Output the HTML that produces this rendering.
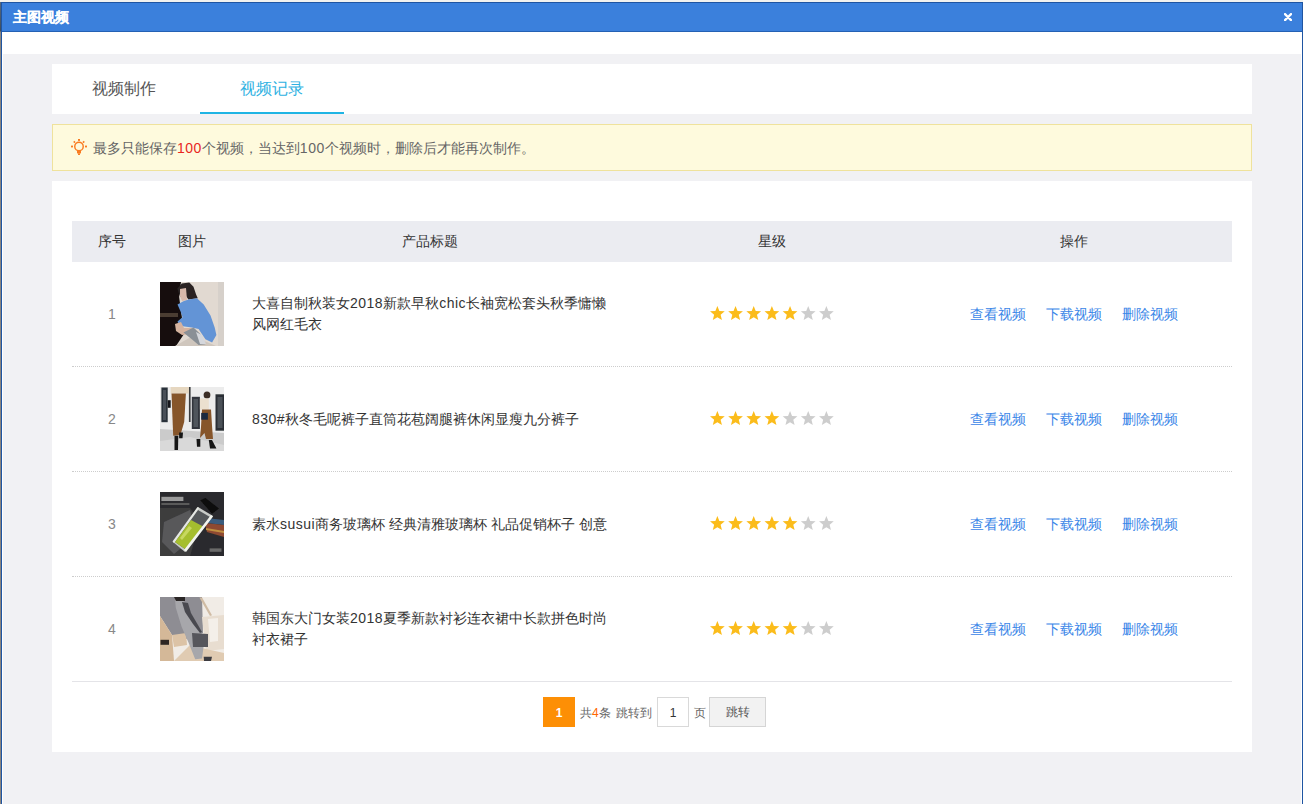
<!DOCTYPE html>
<html><head><meta charset="utf-8"><title>主图视频</title>
<style>
*{margin:0;padding:0;box-sizing:border-box}
html,body{width:1303px;height:804px;overflow:hidden;background:#f2f2ef}
body{font-family:"Liberation Sans",sans-serif;position:relative}
.abs{position:absolute}
#edgeL{left:0;top:2px;width:1px;height:802px;background:linear-gradient(#55687e 0,#3f4d5c 29px,#8a8580 30px,#8a8580 100%)}
#modal{left:1px;top:2px;width:1302px;height:802px;background:#fff;border:1px solid #1f55a2;border-bottom:none}
#graybg{left:3px;top:54px;width:1298px;height:750px;background:#f1f1f4}
#hdr{left:2px;top:3px;width:1300px;height:29px;background:#3b80dc;border-bottom:1px solid #2461b4}
#hdr .t{position:absolute;left:11px;top:5.5px;font-size:14px;font-weight:bold;color:#fff;line-height:16px;-webkit-text-stroke:0.12px #fff}
#hdr .x{position:absolute;left:1281.8px;top:9.7px;width:8px;height:8.2px}
#white{left:2px;top:32px;width:1300px;height:22px;background:#fff}
.card{position:absolute;left:52px;width:1200px;background:#fff}
#tabs{top:64px;height:50px}
.tab{position:absolute;top:0;height:50px;line-height:50px;font-size:16px;color:#555;text-align:center}
#notice{left:52px;top:124px;width:1200px;height:47px;background:#fefadd;border:1px solid #efe29c}
#notice .txt{position:absolute;left:40px;top:14px;font-size:14px;line-height:18px;color:#666;white-space:nowrap}
#tbl{top:181px;height:571px}
#thead{position:absolute;left:20px;top:40px;width:1160px;height:41px;background:#ebecf1;font-size:14px;color:#333}
.th{position:absolute;top:0;line-height:41px;text-align:center}
.row{position:absolute;left:20px;width:1160px;height:105px;border-bottom:1px dotted #cdcdcd}
.row .num{position:absolute;left:0;width:80px;top:0;line-height:104px;text-align:center;font-size:14px;color:#888}
.row .pic{position:absolute;left:88px;top:20px;width:64px;height:64px;overflow:hidden}
.row .ttl{position:absolute;left:180px;width:356px;font-size:14px;line-height:21px;color:#333}
.row .stars{position:absolute;left:638px;top:44px;height:15px}
.row .ops{position:absolute;left:898px;top:0;line-height:104px;font-size:14px;color:#3a86e8;white-space:nowrap}
.ops span{position:absolute;top:0}
.l{letter-spacing:0.5px}
.row.last{border-bottom:1px solid #e4e4e8;height:105px}
#pager{position:absolute;left:491px;top:516px;height:30px;font-size:12px;color:#666;white-space:nowrap}
#pager .cur{position:absolute;left:0;top:0;width:32px;height:30px;background:#fd8f05;color:#fff;font-weight:bold;text-align:center;line-height:32px}
#pager .lab{position:absolute;top:1px;line-height:30px}
#pager .inp{position:absolute;left:114px;top:0;width:32px;height:30px;border:1px solid #d9d9d9;text-align:center;line-height:30px;color:#333}
#pager .btn{position:absolute;left:166px;top:0;width:57px;height:30px;border:1px solid #d5d5d5;background:#f2f2f2;text-align:center;line-height:29px;color:#555}
</style></head>
<body>
<div class="abs" id="edgeL"></div>
<div class="abs" id="modal"></div>
<div class="abs" id="hdr"><span class="t">主图视频</span>
<svg class="x" viewBox="0 0 8 8.2"><path d="M1 1.1L7 7.1M7 1.1L1 7.1" stroke="#fff" stroke-width="2.3" stroke-linecap="round"/></svg></div>
<div class="abs" id="white"></div>
<div class="abs" id="graybg"></div>

<div class="card" id="tabs">
  <div class="tab" style="left:0;width:144px">视频制作</div>
  <div class="tab" style="left:148px;width:144px;color:#2eb1e2">视频记录</div>
  <div class="abs" style="left:148px;top:48px;width:144px;height:2px;background:#1fb4e4"></div>
</div>

<div class="abs" id="notice">
  <svg class="abs" style="left:13px;top:9px" width="26" height="26" viewBox="0 0 26 26"><g fill="#f97c22"><circle cx="13" cy="12.5" r="4.25" fill="none" stroke="#f97c22" stroke-width="1.45"/><rect x="12" y="5" width="2" height="1.9"/><rect x="5" y="11.6" width="2" height="1.8"/><rect x="19" y="11.6" width="2" height="1.8"/><path d="M7.2 7.9L8.3 6.8L9.6 8.1L8.5 9.2Z"/><path d="M18.8 7.9L17.7 6.8L16.4 8.1L17.5 9.2Z"/><rect x="11" y="17" width="4" height="2.4"/><rect x="12" y="19.3" width="2" height="1.7"/></g></svg>
  <div class="txt">最多只能保存<span class="l" style="color:#e8261f">100</span>个视频，当达到<span class="l">100</span>个视频时，删除后才能再次制作。</div>
</div>

<div class="card" id="tbl">
  <div id="thead">
    <div class="th" style="left:0;width:80px">序号</div>
    <div class="th" style="left:80px;width:80px">图片</div>
    <div class="th" style="left:160px;width:396px">产品标题</div>
    <div class="th" style="left:556px;width:288px">星级</div>
    <div class="th" style="left:844px;width:316px">操作</div>
  </div>
  <!--ROWS-->
  <div class="row" style="top:81px">
    <div class="num">1</div>
    <div class="pic"><svg width="64" height="64" viewBox="0 0 64 64"><defs><filter id="b1" x="-5%" y="-5%" width="110%" height="110%"><feGaussianBlur stdDeviation="0.45"/></filter></defs>
<rect width="64" height="64" fill="#e1d9d1"/><g filter="url(#b1)">
<rect x="0" y="0" width="64" height="64" fill="#e1d9d1"/>
<rect x="58" y="0" width="6" height="64" fill="#d6d0ca"/>
<path d="M0 0H21L19 14L22 36L18 44L24 52L16 64H0Z" fill="#141110"/>
<path d="M0 31H18V35H0Z" fill="#4b3d31"/>
<path d="M15 64L31 55L47 60L56 64Z" fill="#cfc6bd"/>
<path d="M17.5 6.5L21.7 1.4L29.3 0.5L33.5 4.8L36.1 12.4L37.8 16.2L28.5 17.5L23.4 10.7L20 14.9Z" fill="#2a2424"/>
<path d="M20 7L26 6L27 18L22 19L20 14Z" fill="#d8b8aa"/>
<path d="M17.5 22.5L23.4 19.2L28.5 17.5L36.9 16.2L43.7 22.5L50.5 33.5L54.7 45.4L56.4 53L52.1 60.6L45.4 57.2L38.6 47.1L31.8 45.4L19.2 43.7L17.5 39.5L22.5 35.2L20.8 30.1Z" fill="#6494d6"/>
<path d="M15 42L21 40L24 46L32 46L31 52L22 53L16 49Z" fill="#d6b39f"/>
<path d="M23.4 50.5L33.5 45.4L40.3 52.1L45.4 62.3L38.6 63.1L31.8 57.2Z" fill="#8a9096"/>
<path d="M36 50L42 53L46 62L40 62Z" fill="#d5d7dc"/>
</g></svg></div>
    <div class="ttl" style="top:31px">大喜自制秋装女<span class="l">2018</span>新款早秋<span class="l">chic</span>长袖宽松套头秋季慵懒风网红毛衣</div>
    <svg class="stars" width="124" height="15" viewBox="0 0 124 15"><path transform="translate(0.00,0)" d="M7.37 0.00L9.37 4.99L14.74 5.36L10.61 8.80L11.93 14.02L7.37 11.16L2.81 14.02L4.13 8.80L-0.00 5.36L5.37 4.99Z" fill="#fbbc1b"/><path transform="translate(18.17,0)" d="M7.37 0.00L9.37 4.99L14.74 5.36L10.61 8.80L11.93 14.02L7.37 11.16L2.81 14.02L4.13 8.80L-0.00 5.36L5.37 4.99Z" fill="#fbbc1b"/><path transform="translate(36.34,0)" d="M7.37 0.00L9.37 4.99L14.74 5.36L10.61 8.80L11.93 14.02L7.37 11.16L2.81 14.02L4.13 8.80L-0.00 5.36L5.37 4.99Z" fill="#fbbc1b"/><path transform="translate(54.51,0)" d="M7.37 0.00L9.37 4.99L14.74 5.36L10.61 8.80L11.93 14.02L7.37 11.16L2.81 14.02L4.13 8.80L-0.00 5.36L5.37 4.99Z" fill="#fbbc1b"/><path transform="translate(72.68,0)" d="M7.37 0.00L9.37 4.99L14.74 5.36L10.61 8.80L11.93 14.02L7.37 11.16L2.81 14.02L4.13 8.80L-0.00 5.36L5.37 4.99Z" fill="#fbbc1b"/><path transform="translate(90.85,0)" d="M7.37 0.00L9.37 4.99L14.74 5.36L10.61 8.80L11.93 14.02L7.37 11.16L2.81 14.02L4.13 8.80L-0.00 5.36L5.37 4.99Z" fill="#cdcdcd"/><path transform="translate(109.02,0)" d="M7.37 0.00L9.37 4.99L14.74 5.36L10.61 8.80L11.93 14.02L7.37 11.16L2.81 14.02L4.13 8.80L-0.00 5.36L5.37 4.99Z" fill="#cdcdcd"/></svg>
    <div class="ops"><span style="left:0">查看视频</span><span style="left:76px">下载视频</span><span style="left:152px">删除视频</span></div>
  </div>
  <div class="row" style="top:186px">
    <div class="num">2</div>
    <div class="pic"><svg width="64" height="64" viewBox="0 0 64 64"><defs><filter id="b2" x="-5%" y="-5%" width="110%" height="110%"><feGaussianBlur stdDeviation="0.45"/></filter></defs>
<rect width="64" height="64" fill="#e6e6e6"/><g filter="url(#b2)">
<rect width="64" height="64" fill="#ececec"/>
<path d="M0 42L64 46V64H0Z" fill="#cbcbcb"/>
<path d="M0 54L30 50L64 58V64H0Z" fill="#d9d9d9"/>
<rect x="1.4" y="0.5" width="6.3" height="34.7" fill="#2c323a"/><rect x="3" y="3" width="3" height="30" fill="#4a5058"/>
<rect x="31.8" y="9.8" width="8.1" height="32.2" fill="#30353c"/><rect x="33.5" y="12" width="4.5" height="28" fill="#50555c"/>
<rect x="28.9" y="0" width="1.7" height="35" fill="#3a3c40"/>
<rect x="55.5" y="7.3" width="8.5" height="36.4" fill="#2a2f36"/><rect x="57.5" y="10" width="5" height="31" fill="#4c5158"/>
<path d="M10.7 0H28.9V6.5H10.7Z" fill="#e6d7c0"/>
<path d="M11.5 6.5L25.9 6.5L24.2 35L20.4 48L13.2 48.8Z" fill="#86542a"/>
<rect x="7.7" y="13.2" width="3" height="7.6" fill="#16171a"/>
<path d="M14.5 48.8H18.3L18 63.1H14.5Z" fill="#141414"/>
<path d="M19.1 45.4H23L22.5 51.3H19.1Z" fill="#151515"/>
<ellipse cx="47" cy="8" rx="3.4" ry="3.6" fill="#3b2d25"/>
<path d="M39.9 11.5H48.8V22.5H39.9Z" fill="#ebe0cf"/>
<path d="M42 22.5H51L52.1 40L53 52.1H46L44.5 46L40 51L41 40Z" fill="#86542a"/>
<rect x="41.2" y="25.9" width="6.7" height="6.8" fill="#1e2a40"/>
<path d="M36.5 52.1H40.3L40.3 59.8H37Z" fill="#121212"/>
<path d="M48.8 53H52L56.4 61.5H50Z" fill="#121212"/>
</g></svg></div>
    <div class="ttl" style="top:42px"><span class="l">830#</span>秋冬毛呢裤子直筒花苞阔腿裤休闲显瘦九分裤子</div>
    <svg class="stars" width="124" height="15" viewBox="0 0 124 15"><path transform="translate(0.00,0)" d="M7.37 0.00L9.37 4.99L14.74 5.36L10.61 8.80L11.93 14.02L7.37 11.16L2.81 14.02L4.13 8.80L-0.00 5.36L5.37 4.99Z" fill="#fbbc1b"/><path transform="translate(18.17,0)" d="M7.37 0.00L9.37 4.99L14.74 5.36L10.61 8.80L11.93 14.02L7.37 11.16L2.81 14.02L4.13 8.80L-0.00 5.36L5.37 4.99Z" fill="#fbbc1b"/><path transform="translate(36.34,0)" d="M7.37 0.00L9.37 4.99L14.74 5.36L10.61 8.80L11.93 14.02L7.37 11.16L2.81 14.02L4.13 8.80L-0.00 5.36L5.37 4.99Z" fill="#fbbc1b"/><path transform="translate(54.51,0)" d="M7.37 0.00L9.37 4.99L14.74 5.36L10.61 8.80L11.93 14.02L7.37 11.16L2.81 14.02L4.13 8.80L-0.00 5.36L5.37 4.99Z" fill="#fbbc1b"/><path transform="translate(72.68,0)" d="M7.37 0.00L9.37 4.99L14.74 5.36L10.61 8.80L11.93 14.02L7.37 11.16L2.81 14.02L4.13 8.80L-0.00 5.36L5.37 4.99Z" fill="#cdcdcd"/><path transform="translate(90.85,0)" d="M7.37 0.00L9.37 4.99L14.74 5.36L10.61 8.80L11.93 14.02L7.37 11.16L2.81 14.02L4.13 8.80L-0.00 5.36L5.37 4.99Z" fill="#cdcdcd"/><path transform="translate(109.02,0)" d="M7.37 0.00L9.37 4.99L14.74 5.36L10.61 8.80L11.93 14.02L7.37 11.16L2.81 14.02L4.13 8.80L-0.00 5.36L5.37 4.99Z" fill="#cdcdcd"/></svg>
    <div class="ops"><span style="left:0">查看视频</span><span style="left:76px">下载视频</span><span style="left:152px">删除视频</span></div>
  </div>
  <div class="row" style="top:291px">
    <div class="num">3</div>
    <div class="pic"><svg width="64" height="64" viewBox="0 0 64 64"><defs><filter id="b3" x="-5%" y="-5%" width="110%" height="110%"><feGaussianBlur stdDeviation="0.55"/></filter></defs>
<rect width="64" height="64" fill="#2a2a2c"/><g filter="url(#b3)">
<rect width="64" height="64" fill="#2b2b2d"/>
<path d="M0 16H30L40 30L30 64H0Z" fill="#3c3c3e"/>
<path d="M4 30L30 18L36 44L14 62L2 50Z" fill="#58585a"/>
<rect x="1.4" y="4.8" width="22" height="4.2" fill="#9a9a9a"/>
<rect x="1.4" y="11" width="28" height="2" fill="#5a5a5a"/>
<path d="M46 26L64 28V33L46 31Z" fill="#3a5c7e"/>
<path d="M45 31L64 33V45L47 40Z" fill="#8e4a30"/>
<path d="M46 36L64 39V41L46 38Z" fill="#c09040"/>
<path d="M13 50L38 15L53 24L25 60Z" fill="#c9ccc8"/>
<path d="M15 50L38 18L50 25L25 57Z" fill="#55585a"/>
<path d="M15 50L31 28L44 35L25 57Z" fill="#a5be2e"/>
<path d="M20 46L29 34L32 36L22 48Z" fill="#c8d860"/>
<path d="M24 58L51 23L53 24.5L26 60Z" fill="#f2f4ee"/>
<path d="M12.5 49.5L37.5 15L39 16L14 51Z" fill="#e6e8e4"/>
<path d="M40.3 8.2L45.4 6L58.9 16.6L52.1 21.7Z" fill="#0b0b0c"/>
<rect x="49.6" y="56.4" width="11.9" height="3.4" fill="#6a6a6a"/>
</g></svg></div>
    <div class="ttl" style="top:42px">素水<span class="l">susui</span>商务玻璃杯 经典清雅玻璃杯 礼品促销杯子 创意</div>
    <svg class="stars" width="124" height="15" viewBox="0 0 124 15"><path transform="translate(0.00,0)" d="M7.37 0.00L9.37 4.99L14.74 5.36L10.61 8.80L11.93 14.02L7.37 11.16L2.81 14.02L4.13 8.80L-0.00 5.36L5.37 4.99Z" fill="#fbbc1b"/><path transform="translate(18.17,0)" d="M7.37 0.00L9.37 4.99L14.74 5.36L10.61 8.80L11.93 14.02L7.37 11.16L2.81 14.02L4.13 8.80L-0.00 5.36L5.37 4.99Z" fill="#fbbc1b"/><path transform="translate(36.34,0)" d="M7.37 0.00L9.37 4.99L14.74 5.36L10.61 8.80L11.93 14.02L7.37 11.16L2.81 14.02L4.13 8.80L-0.00 5.36L5.37 4.99Z" fill="#fbbc1b"/><path transform="translate(54.51,0)" d="M7.37 0.00L9.37 4.99L14.74 5.36L10.61 8.80L11.93 14.02L7.37 11.16L2.81 14.02L4.13 8.80L-0.00 5.36L5.37 4.99Z" fill="#fbbc1b"/><path transform="translate(72.68,0)" d="M7.37 0.00L9.37 4.99L14.74 5.36L10.61 8.80L11.93 14.02L7.37 11.16L2.81 14.02L4.13 8.80L-0.00 5.36L5.37 4.99Z" fill="#fbbc1b"/><path transform="translate(90.85,0)" d="M7.37 0.00L9.37 4.99L14.74 5.36L10.61 8.80L11.93 14.02L7.37 11.16L2.81 14.02L4.13 8.80L-0.00 5.36L5.37 4.99Z" fill="#cdcdcd"/><path transform="translate(109.02,0)" d="M7.37 0.00L9.37 4.99L14.74 5.36L10.61 8.80L11.93 14.02L7.37 11.16L2.81 14.02L4.13 8.80L-0.00 5.36L5.37 4.99Z" fill="#cdcdcd"/></svg>
    <div class="ops"><span style="left:0">查看视频</span><span style="left:76px">下载视频</span><span style="left:152px">删除视频</span></div>
  </div>
  <div class="row last" style="top:396px">
    <div class="num">4</div>
    <div class="pic"><svg width="64" height="64" viewBox="0 0 64 64"><defs><filter id="b4" x="-5%" y="-5%" width="110%" height="110%"><feGaussianBlur stdDeviation="0.55"/></filter></defs>
<rect width="64" height="64" fill="#ece4da"/><g filter="url(#b4)">
<rect width="64" height="64" fill="#f1ece6"/>
<path d="M0 0H42L43 36L26 42L12 38L0 19Z" fill="#8e8d93"/>
<path d="M39.4 0.5L42 0.5L52 18.3L50 19Z" fill="#d0bca4"/>
<path d="M42 20L64 18V52L46 54Z" fill="#e8ddd0"/>
<path d="M48 22L58 21L58 44L50 45Z" fill="#f4efe9"/>
<path d="M0 19L12 38L14 64H0Z" fill="#d4b898"/>
<path d="M12 38L26 36L27 48L14 50Z" fill="#dcc3a6"/>
<rect x="0.5" y="42.8" width="8.5" height="5" fill="#2e2824"/>
<path d="M14 64L30 48L46 52L64 56V64Z" fill="#e0cbb2"/>
<path d="M15 2.2L22.5 2.2L30.1 15L37.8 28.5L42 38.6L43.7 48.8L42 61.5L35.2 62.3L28.5 45.4L21.7 30.1L15.8 10.7Z" fill="#a7a7ab"/>
<path d="M22 5L28 6L31 16L38 28L42 35L40 36L33 27L25 15Z" fill="#4a4a50"/>
<path d="M32 36L48 37L48 50L33 50Z" fill="#56565c"/>
<path d="M14 0H25V3.9L16 4Z" fill="#2c2626"/>
<path d="M43.7 59.8H52L51 64H44Z" fill="#3a3a40"/>
</g></svg></div>
    <div class="ttl" style="top:31px">韩国东大门女装<span class="l">2018</span>夏季新款衬衫连衣裙中长款拼色时尚衬衣裙子</div>
    <svg class="stars" width="124" height="15" viewBox="0 0 124 15"><path transform="translate(0.00,0)" d="M7.37 0.00L9.37 4.99L14.74 5.36L10.61 8.80L11.93 14.02L7.37 11.16L2.81 14.02L4.13 8.80L-0.00 5.36L5.37 4.99Z" fill="#fbbc1b"/><path transform="translate(18.17,0)" d="M7.37 0.00L9.37 4.99L14.74 5.36L10.61 8.80L11.93 14.02L7.37 11.16L2.81 14.02L4.13 8.80L-0.00 5.36L5.37 4.99Z" fill="#fbbc1b"/><path transform="translate(36.34,0)" d="M7.37 0.00L9.37 4.99L14.74 5.36L10.61 8.80L11.93 14.02L7.37 11.16L2.81 14.02L4.13 8.80L-0.00 5.36L5.37 4.99Z" fill="#fbbc1b"/><path transform="translate(54.51,0)" d="M7.37 0.00L9.37 4.99L14.74 5.36L10.61 8.80L11.93 14.02L7.37 11.16L2.81 14.02L4.13 8.80L-0.00 5.36L5.37 4.99Z" fill="#fbbc1b"/><path transform="translate(72.68,0)" d="M7.37 0.00L9.37 4.99L14.74 5.36L10.61 8.80L11.93 14.02L7.37 11.16L2.81 14.02L4.13 8.80L-0.00 5.36L5.37 4.99Z" fill="#fbbc1b"/><path transform="translate(90.85,0)" d="M7.37 0.00L9.37 4.99L14.74 5.36L10.61 8.80L11.93 14.02L7.37 11.16L2.81 14.02L4.13 8.80L-0.00 5.36L5.37 4.99Z" fill="#cdcdcd"/><path transform="translate(109.02,0)" d="M7.37 0.00L9.37 4.99L14.74 5.36L10.61 8.80L11.93 14.02L7.37 11.16L2.81 14.02L4.13 8.80L-0.00 5.36L5.37 4.99Z" fill="#cdcdcd"/></svg>
    <div class="ops"><span style="left:0">查看视频</span><span style="left:76px">下载视频</span><span style="left:152px">删除视频</span></div>
  </div>
<!--/ROWS-->
<div id="pager"><div class="cur">1</div><span class="lab" style="left:37px">共<span style="color:#f60">4</span>条</span><span class="lab" style="left:73px">跳转到</span><div class="inp">1</div><span class="lab" style="left:151px">页</span><div class="btn">跳转</div></div>
</div>
</body></html>
